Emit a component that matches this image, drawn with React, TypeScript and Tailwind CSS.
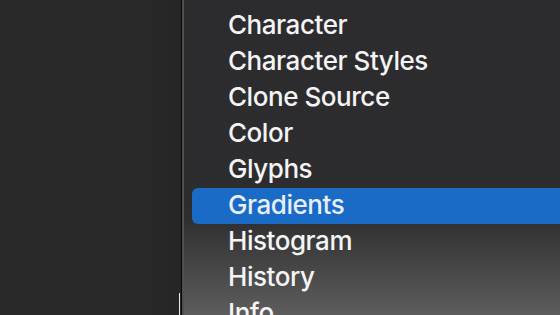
const items = [
  "Character",
  "Character Styles",
  "Clone Source",
  "Color",
  "Glyphs",
  "Gradients",
  "Histogram",
  "History",
  "Info",
]

const selected = "Gradients"

export default function App() {
  return (
    <div className="flex h-[315px] w-[560px] overflow-hidden bg-[#272727] font-['Inter',sans-serif]">
      <div className="relative h-full w-[181px] shrink-0 bg-[linear-gradient(90deg,#282828_0px,#282828_150px,#262626_181px)]">
        <div className="absolute bottom-0 right-[1px] h-[22px] w-[1px] bg-[#e8e8e8]" />
      </div>
      <div className="h-full w-[1px] shrink-0 bg-[#080808]" />
      <div className="h-full w-[2px] shrink-0 bg-[#505052]" />
      <div className="flex h-full flex-1 flex-col bg-[linear-gradient(180deg,#2c2c2e_0px,#2d2d2f_215px,#5d5d5d_315px)] pl-2 pt-2">
        {items.map((item) => {
          const active = item === selected
          return (
            <div
              key={item}
              className={
                active
                  ? "flex h-9 shrink-0 items-center rounded-l-[6px] bg-[#1a6bc6] pb-[3px] pl-[36px] text-[26px] font-medium leading-[36px] tracking-[-0.45px] text-[#e6eef9]"
                  : "flex h-9 shrink-0 items-center pb-[3px] pl-[36px] text-[26px] font-medium leading-[36px] tracking-[-0.45px] text-[#f4f4f4]"
              }
            >
              {item}
            </div>
          )
        })}
      </div>
    </div>
  )
}
